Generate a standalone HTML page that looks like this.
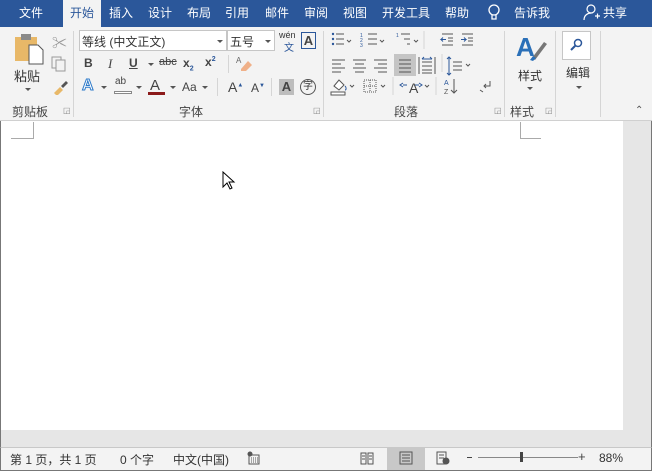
<!DOCTYPE html>
<html><head><meta charset="utf-8"><style>
*{margin:0;padding:0;box-sizing:border-box}
body{width:652px;height:471px;overflow:hidden;background:#f3f3f3;font-family:"Liberation Sans","Noto Sans CJK SC",sans-serif;position:relative;font-size:12px;color:#333}
.a{position:absolute;white-space:nowrap}
.tab{position:absolute;top:4px;color:#fff;font-size:12px}
.sep{position:absolute;width:1px;background:#d5d5d5}
.lbl{position:absolute;top:103px;font-size:12px;color:#444}
.ic{position:absolute;font-size:12px;color:#444}
.dd{position:absolute;width:0;height:0;border-left:3px solid transparent;border-right:3px solid transparent;border-top:3px solid #555}
</style></head><body>
<div class="a" style="left:0;top:0;width:652px;height:27px;background:#2b579a"></div>
<div class="a" style="left:63px;top:0;width:38px;height:27px;background:#f3f3f3"></div>
<div class="tab" style="left:19px">文件</div>
<div class="tab" style="left:70px;color:#2b579a">开始</div>
<div class="tab" style="left:109px">插入</div>
<div class="tab" style="left:148px">设计</div>
<div class="tab" style="left:187px">布局</div>
<div class="tab" style="left:225px">引用</div>
<div class="tab" style="left:265px">邮件</div>
<div class="tab" style="left:304px">审阅</div>
<div class="tab" style="left:343px">视图</div>
<div class="tab" style="left:382px">开发工具</div>
<div class="tab" style="left:445px">帮助</div>
<svg class="a" style="left:487px;top:3px" width="14" height="19"><circle cx="7" cy="7" r="5" fill="none" stroke="#fff" stroke-width="1.3"/><path d="M5 12v4h4v-4" fill="none" stroke="#fff" stroke-width="1.3"/></svg>
<div class="tab" style="left:514px">告诉我</div>
<svg class="a" style="left:583px;top:3px" width="18" height="18"><circle cx="8" cy="6" r="4" fill="none" stroke="#fff" stroke-width="1.2"/><path d="M1 17c0-5 4-7 7-7M12 13h5M14.5 10.5v5" fill="none" stroke="#fff" stroke-width="1.2"/></svg>
<div class="tab" style="left:603px">共享</div>

<div class="a" style="left:0;top:120px;width:652px;height:1px;background:#d0d0d0"></div>
<div class="sep" style="left:73px;top:31px;height:86px"></div>
<div class="sep" style="left:323px;top:31px;height:86px"></div>
<div class="sep" style="left:504px;top:31px;height:86px"></div>
<div class="sep" style="left:555px;top:31px;height:86px"></div>
<div class="sep" style="left:600px;top:31px;height:86px"></div>

<svg class="a" style="left:14px;top:33px" width="30" height="32"><rect x="1" y="4" width="22" height="24" fill="#e8b868"/><rect x="7" y="1" width="10" height="6" fill="#8a8a8a"/><path d="M15 12h9l5 5v14H15z" fill="#fff" stroke="#555"/></svg>
<div class="a" style="left:14px;top:66px;font-size:13px">粘贴</div>
<div class="dd" style="left:25px;top:88px"></div>
<div class="ic" style="left:52px;top:32px;color:#999;font-size:15px">✂</div>
<svg class="a" style="left:51px;top:56px" width="16" height="16"><rect x="1" y="1" width="9" height="11" fill="none" stroke="#999"/><rect x="5" y="4" width="9" height="11" fill="#f3f3f3" stroke="#999"/></svg>
<svg class="a" style="left:52px;top:79px" width="16" height="16"><path d="M2 14l6-6 3 3-6 6z" fill="#e8b868"/><path d="M9 7l5-5 2 2-5 5z" fill="#555"/></svg>
<div class="lbl" style="left:12px">剪贴板</div>
<div class="ic" style="left:63px;top:106px;font-size:8px;color:#888">◲</div>

<div class="a" style="left:79px;top:30px;width:148px;height:21px;background:#fff;border:1px solid #c6c6c6"></div>
<div class="a" style="left:82px;top:33px;font-size:12px">等线 (中文正文)</div>
<div class="dd" style="left:217px;top:40px"></div>
<div class="a" style="left:227px;top:30px;width:48px;height:21px;background:#fff;border:1px solid #c6c6c6"></div>
<div class="a" style="left:230px;top:33px;font-size:12px">五号</div>
<div class="dd" style="left:265px;top:40px"></div>
<div class="a" style="left:279px;top:30px;font-size:9px;color:#333">wén</div>
<div class="a" style="left:284px;top:39px;font-size:10px;color:#2b579a">文</div>
<div class="a" style="left:301px;top:32px;width:15px;height:17px;border:1px solid #2b579a;font-size:13px;font-weight:bold;text-align:center;line-height:15px;color:#444">A</div>
<div class="ic" style="left:84px;top:56px;font-weight:bold">B</div>
<div class="ic" style="left:108px;top:56px;font-style:italic;font-family:'Liberation Serif',serif;font-size:13px">I</div>
<div class="ic" style="left:129px;top:56px;text-decoration:underline;font-weight:bold">U</div>
<div class="dd" style="left:148px;top:63px"></div>
<div class="ic" style="left:159px;top:56px;text-decoration:line-through;font-size:11px">abc</div>
<div class="ic" style="left:183px;top:56px;font-weight:bold">x<sub style="font-size:7px;color:#2b579a">2</sub></div>
<div class="ic" style="left:205px;top:55px;font-weight:bold">x<sup style="font-size:7px;color:#2b579a">2</sup></div>
<div class="sep" style="left:228px;top:55px;height:18px"></div>
<svg class="a" style="left:235px;top:55px" width="18" height="16"><path d="M6 14l7-8 4 4-6 6H6z" fill="#f0b088"/><text x="1" y="8" font-size="8" fill="#666" font-family="Liberation Sans">A</text></svg>
<div class="ic" style="left:82px;top:77px;font-size:16px;color:#fff;-webkit-text-stroke:1px #2b79c9;font-weight:bold">A</div>
<div class="dd" style="left:101px;top:86px"></div>
<div class="ic" style="left:115px;top:76px;font-size:10px">ab</div>
<div class="a" style="left:114px;top:91px;width:18px;height:3px;border:1px solid #888;background:#fff"></div>
<div class="dd" style="left:136px;top:86px"></div>
<div class="ic" style="left:150px;top:77px;font-size:15px">A</div>
<div class="a" style="left:148px;top:92px;width:17px;height:3px;background:#8b1a1a"></div>
<div class="dd" style="left:170px;top:86px"></div>
<div class="ic" style="left:182px;top:80px">Aa</div>
<div class="dd" style="left:202px;top:86px"></div>
<div class="sep" style="left:217px;top:78px;height:18px"></div>
<div class="ic" style="left:228px;top:79px;font-size:14px">A<sup style="font-size:6px;color:#2b579a">▲</sup></div>
<div class="ic" style="left:251px;top:81px;font-size:12px">A<sup style="font-size:6px;color:#2b579a">▼</sup></div>
<div class="sep" style="left:271px;top:78px;height:18px"></div>
<div class="a" style="left:279px;top:79px;width:15px;height:16px;background:#bdbdbd;font-weight:bold;font-size:13px;text-align:center;line-height:16px;color:#444">A</div>
<div class="a" style="left:300px;top:79px;width:16px;height:16px;border:1px solid #555;border-radius:50%;font-size:10px;text-align:center;line-height:14px">字</div>
<div class="lbl" style="left:179px">字体</div>
<div class="ic" style="left:313px;top:106px;font-size:8px;color:#888">◲</div>

<svg class="a" style="left:330px;top:30px" width="170" height="70" fill="none" stroke="#555">
<g fill="#2b579a" stroke="none"><circle cx="3" cy="4" r="1.2"/><circle cx="3" cy="9" r="1.2"/><circle cx="3" cy="14" r="1.2"/></g>
<path d="M6 4h8M6 9h8M6 14h8"/>
<path d="M17 10l2 2 2-2"/>
<path d="M38 4h9M38 9h9M38 14h9"/>
<text x="30" y="7" font-size="5" fill="#2b579a" stroke="none">1</text><text x="30" y="12" font-size="5" fill="#2b579a" stroke="none">2</text><text x="30" y="17" font-size="5" fill="#2b579a" stroke="none">3</text>
<path d="M50 10l2 2 2-2"/>
<path d="M71 4h9M74 9h6M77 14h3"/><text x="66" y="7" font-size="5" fill="#2b579a" stroke="none">1</text>
<path d="M84 10l2 2 2-2"/>
<path d="M94 1v18" stroke="#d5d5d5"/>
<path d="M112 4h11M118 8h5M118 11h5M112 15h11"/><path d="M116 9.5h-5l2-2M111 9.5l2 2" stroke="#2b579a"/>
<path d="M132 4h11M138 8h5M138 11h5M132 15h11"/><path d="M131 9.5h5l-2-2M136 9.5l-2 2" stroke="#2b579a"/>
<path d="M2 30h13M2 34h9M2 38h13M2 42h9"/>
<path d="M23 30h13M25 34h9M23 38h13M25 42h9"/>
<path d="M44 30h13M48 34h9M44 38h13M48 42h9"/>
</svg>
<div class="a" style="left:394px;top:54px;width:22px;height:22px;background:#c5c5c5"></div>
<svg class="a" style="left:394px;top:54px" width="110" height="48" fill="none" stroke="#555">
<path d="M5 6h12M5 10h12M5 14h12M5 18h12"/>
<path d="M25 3v17M41 3v17M28 8h10M28 12h10M28 16h10M28 19h10"/><path d="M28 5h10M28 5l2-2M38 5l-2-2" stroke="#2b579a"/>
<path d="M48 0v18" stroke="#d5d5d5"/>
<path d="M59 8h9M59 12h9M59 16h9"/><path d="M55 3v18M53 5l2-2 2 2M53 19l2 2 2-2" stroke="#2b579a"/>
<path d="M72 10l2 2 2-2"/>
</svg>
<svg class="a" style="left:330px;top:76px" width="170" height="24" fill="none" stroke="#555">
<path d="M4 10l5-6 5 5-5 5z" fill="#fff"/><rect x="1" y="16" width="14" height="3" fill="#fff"/><path d="M15 10c2 2 1 4 0 4" stroke="#2b579a"/>
<path d="M20 9l2 2 2-2"/>
<rect x="34" y="4" width="12" height="12" stroke-dasharray="1 1"/><path d="M40 4v12M34 10h12" stroke-dasharray="1 1"/>
<path d="M51 9l2 2 2-2"/>
<path d="M63 1v18" stroke="#d5d5d5"/>
<text x="79" y="17" font-size="14" fill="#444" stroke="none" font-family="Liberation Sans">A</text><path d="M73 7l-3 2 3 2M89 7l3 2-3 2M73 9h4M85 9h4" stroke="#2b579a"/>
<path d="M95 9l2 2 2-2"/>
<path d="M106 1v18" stroke="#d5d5d5"/>
<text x="114" y="9" font-size="7" fill="#2b579a" stroke="none">A</text><text x="114" y="18" font-size="7" fill="#555" stroke="none">Z</text><path d="M124 3v14M121 14l3 3 3-3"/>
<path d="M160 5v5h-6M156 8l-2 2 2 2M150 14l3 2"/>
</svg>
<div class="lbl" style="left:394px">段落</div>
<div class="ic" style="left:494px;top:106px;font-size:8px;color:#888">◲</div>

<svg class="a" style="left:514px;top:32px" width="36" height="32"><text x="2" y="24" font-size="26" font-weight="bold" fill="#2b70b8" font-family="Liberation Sans">A</text><path d="M18 26l12-16 3 2-12 16z" fill="#777"/><path d="M16 28l3-4 3 2-3 3z" fill="#2b70b8"/></svg>
<div class="a" style="left:518px;top:67px;font-size:12px">样式</div>
<div class="dd" style="left:527px;top:87px"></div>
<div class="lbl" style="left:510px">样式</div>
<div class="ic" style="left:545px;top:106px;font-size:8px;color:#888">◲</div>

<div class="a" style="left:562px;top:31px;width:29px;height:29px;border:1px solid #c6c6c6;background:#fff"></div>
<svg class="a" style="left:568px;top:37px" width="16" height="16"><circle cx="10" cy="6" r="3.5" fill="none" stroke="#2b579a" stroke-width="1.5"/><path d="M7.5 8.5L3 13" stroke="#2b579a" stroke-width="2"/></svg>
<div class="a" style="left:566px;top:64px;font-size:12px">编辑</div>
<div class="dd" style="left:576px;top:86px"></div>
<div class="ic" style="left:635px;top:105px;font-size:10px;color:#555">⌃</div>

<div class="a" style="left:0;top:121px;width:652px;height:326px;background:#e6e6e6;border-left:1px solid #777;border-right:1px solid #777"></div>
<div class="a" style="left:1px;top:121px;width:622px;height:309px;background:#fff"></div>
<div class="a" style="left:33px;top:122px;width:1px;height:16px;background:#aaa"></div>
<div class="a" style="left:11px;top:138px;width:23px;height:1px;background:#aaa"></div>
<div class="a" style="left:520px;top:122px;width:1px;height:16px;background:#aaa"></div>
<div class="a" style="left:520px;top:138px;width:21px;height:1px;background:#aaa"></div>
<svg class="a" style="left:222px;top:171px" width="14" height="20"><path d="M1 1v15l4-4 3 6 2-1-3-6h5z" fill="#fff" stroke="#000"/></svg>

<div class="a" style="left:0;top:447px;width:652px;height:24px;background:#f3f3f3;border:1px solid #777;border-top:1px solid #c8c8c8"></div>
<div class="a" style="left:10px;top:451px;font-size:12px;color:#333">第 1 页，共 1 页</div>
<div class="a" style="left:120px;top:451px;font-size:12px;color:#333">0 个字</div>
<div class="a" style="left:173px;top:451px;font-size:12px;color:#333">中文(中国)</div>
<svg class="a" style="left:247px;top:451px" width="14" height="14"><rect x="2" y="4" width="10" height="9" fill="none" stroke="#555"/><circle cx="3" cy="3" r="2.5" fill="#555"/><path d="M4 7h7M4 9h7M4 11h7" stroke="#555" stroke-dasharray="1 1"/></svg>
<svg class="a" style="left:360px;top:451px" width="14" height="14" fill="none" stroke="#555"><path d="M1 2h5v11H1zM8 2h5v11H8zM2 5h3M2 8h3M9 5h3M9 8h3"/></svg>
<div class="a" style="left:387px;top:448px;width:38px;height:22px;background:#c8c8c8"></div>
<svg class="a" style="left:399px;top:451px" width="14" height="14" fill="none" stroke="#555"><rect x="1" y="1" width="12" height="12"/><path d="M3 4h8M3 7h8M3 10h8"/></svg>
<svg class="a" style="left:436px;top:451px" width="14" height="14" fill="none" stroke="#555"><path d="M1 1h9v12H1zM3 4h5M3 7h5"/><circle cx="10" cy="10" r="3" fill="#555"/></svg>
<div class="a" style="left:467px;top:457px;width:5px;height:1px;background:#444"></div>
<div class="a" style="left:478px;top:457px;width:100px;height:1px;background:#888"></div>
<div class="a" style="left:520px;top:452px;width:3px;height:10px;background:#444"></div>
<div class="a" style="left:578px;top:449px;font-size:13px;color:#444">+</div>
<div class="a" style="left:599px;top:451px;font-size:12px;color:#333">88%</div>
</body></html>
